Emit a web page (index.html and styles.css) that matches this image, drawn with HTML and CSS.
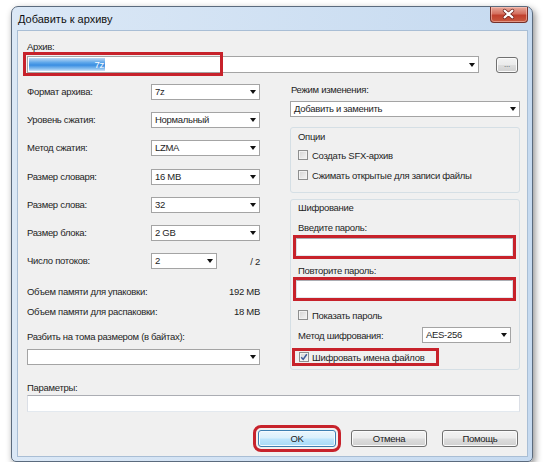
FILE: index.html
```html
<!DOCTYPE html>
<html lang="ru">
<head>
<meta charset="utf-8">
<title>Добавить к архиву</title>
<link rel="stylesheet" href="styles.css">
</head>
<body>
<div class="window">
  <div class="titlebar">
    <span class="title">Добавить к архиву</span>
    <div class="close">
      <svg width="38" height="16" viewBox="0 0 38 16">
        <path d="M15 4.5 L23 11.5 M23 4.5 L15 11.5" stroke="#6a1f18" stroke-width="3.6" stroke-linecap="round" fill="none"/>
        <path d="M15 4.5 L23 11.5 M23 4.5 L15 11.5" stroke="#ffffff" stroke-width="2.2" stroke-linecap="round" fill="none"/>
      </svg>
    </div>
  </div>
  <div class="client">
    <div class="lbl">Архив:</div>
    <div class="archive-row">
      <div class="combo archive-combo"><span class="selected"><span class="hidden-name"></span>7z</span><span class="arrow"></span></div>
      <div class="btn dots">...</div>
      <div class="mark mark-archive"></div>
    </div>

    <div class="cols">
      <div class="left">
        <div class="row"><span class="lbl rl">Формат архива:</span><div class="combo sel"><span class="val">7z</span><span class="arrow"></span></div></div>
        <div class="row"><span class="lbl rl">Уровень сжатия:</span><div class="combo sel"><span class="val">Нормальный</span><span class="arrow"></span></div></div>
        <div class="row"><span class="lbl rl">Метод сжатия:</span><div class="combo sel"><span class="val">LZMA</span><span class="arrow"></span></div></div>
        <div class="row"><span class="lbl rl">Размер словаря:</span><div class="combo sel"><span class="val">16 MB</span><span class="arrow"></span></div></div>
        <div class="row"><span class="lbl rl">Размер слова:</span><div class="combo sel"><span class="val">32</span><span class="arrow"></span></div></div>
        <div class="row"><span class="lbl rl">Размер блока:</span><div class="combo sel"><span class="val">2 GB</span><span class="arrow"></span></div></div>
        <div class="row"><span class="lbl rl">Число потоков:</span><div class="combo sel-short"><span class="val">2</span><span class="arrow"></span></div><span class="threads">/ 2</span></div>

        <div class="mem">
          <div class="memrow"><span>Объем памяти для упаковки:</span><span>192 MB</span></div>
          <div class="memrow"><span>Объем памяти для распаковки:</span><span>18 MB</span></div>
        </div>

        <div class="lbl split-lbl">Разбить на тома размером (в байтах):</div>
        <div class="combo split"><span class="val"></span><span class="arrow"></span></div>
      </div>

      <div class="right">
        <div class="lbl mode-lbl">Режим изменения:</div>
        <div class="combo mode"><span class="val">Добавить и заменить</span><span class="arrow"></span></div>

        <div class="group opts">
          <div class="lbl gl">Опции</div>
          <div class="cb-row"><span class="cb"></span><span>Создать SFX-архив</span></div>
          <div class="cb-row"><span class="cb"></span><span>Сжимать открытые для записи файлы</span></div>
        </div>

        <div class="group enc">
          <div class="lbl gl">Шифрование</div>
          <div class="lbl gl pw1-lbl">Введите пароль:</div>
          <div class="input pw pw1"></div>
          <div class="lbl gl pw2-lbl">Повторите пароль:</div>
          <div class="input pw pw2"></div>
          <div class="cb-row show-pw"><span class="cb"></span><span>Показать пароль</span></div>
          <div class="method-row"><span>Метод шифрования:</span><div class="combo aes"><span class="val">AES-256</span><span class="arrow"></span></div></div>
          <div class="encrypt-names"><span class="cb checked"><svg width="8" height="8" viewBox="0 0 8 8"><path d="M1.2 4.2 L3.2 6.4 L6.8 1.2" stroke="#3d5a9a" stroke-width="1.5" fill="none"/></svg></span><span class="nw">Шифровать имена файлов</span></div>
        </div>
      </div>
    </div>

    <div class="lbl params-lbl">Параметры:</div>
    <div class="input params"></div>

    <div class="buttons">
      <div class="btn default ok">OK</div>
      <div class="btn">Отмена</div>
      <div class="btn">Помощь</div>
    </div>
  </div>
</div>
</body>
</html>
```
FILE: styles.css
```css
* { box-sizing: border-box; }
html, body { margin: 0; background: #ffffff; }
body {
  font-family: "Liberation Sans", Arial, sans-serif;
  font-size: 9.5px;
  letter-spacing: -0.3px;
  color: #1e1e1e;
}
span { white-space: nowrap; }

.window {
  margin: 6px 0 0 11px;
  width: 522px;
  height: 456px;
  border: 1px solid #5b6b7e;
  border-radius: 7px 7px 5px 5px;
  background: linear-gradient(to right, #dbe8f6, #c6daf0);
  box-shadow: 2px 3px 7px rgba(0, 0, 0, 0.45);
  padding: 0 4px 4px 5px;
  display: flex;
  flex-direction: column;
}

.titlebar {
  height: 23px;
  display: flex;
  justify-content: space-between;
  align-items: flex-start;
  padding-left: 1px;
}
.title {
  font-size: 11px;
  letter-spacing: 0;
  color: #111;
  line-height: 24px;
}
.close {
  width: 38px;
  height: 16px;
  border: 1px solid #74302a;
  border-top: none;
  border-radius: 0 0 4px 4px;
  background: linear-gradient(#e9a99b 0%, #d4705f 45%, #c1402d 55%, #c85a40 100%);
  box-shadow: inset 0 0 0 1px rgba(255, 210, 200, 0.5);
  display: flex;
}
.close svg { display: block; margin: -1px 0 0 -1px; }

.client {
  flex: 1;
  background: #f0f0f0;
  border: 1px solid #a9bed5;
  padding: 10px 7px 0 9px;
  display: flex;
  flex-direction: column;
}

.lbl { line-height: 12px; height: 12px; white-space: nowrap; }

/* combos */
.combo {
  position: relative;
  height: 16px;
  background: #ffffff;
  border: 1px solid #a4a4a4;
  display: flex;
  align-items: center;
  padding-left: 3px;
}
.combo .val { line-height: 14px; }
.arrow {
  position: absolute;
  right: 3px;
  top: 50%;
  margin-top: -2px;
  width: 0;
  height: 0;
  border-left: 3.5px solid transparent;
  border-right: 3.5px solid transparent;
  border-top: 4px solid #111;
}

.archive-row {
  position: relative;
  display: flex;
  align-items: center;
  margin-top: 3px;
  height: 17px;
  padding-right: 2px;
}
.archive-combo { width: 452px; height: 17px; padding-left: 1px; }
.selected {
  display: flex;
  align-items: center;
  justify-content: flex-end;
  width: 76px;
  height: 13px;
  padding-right: 1px;
  color: #fff;
  background: linear-gradient(#bcd9f4 0%, #5ea7ea 35%, #3a8ee2 55%, #8fc3f0 85%, #d2e6f8 100%);
}
.hidden-name { flex: 1; }

.btn {
  height: 17px;
  border: 1px solid #707070;
  border-radius: 3px;
  background: linear-gradient(#f3f3f3 0%, #ebebeb 48%, #dddddd 52%, #d0d0d0 100%);
  box-shadow: inset 0 0 0 1px #fbfbfb;
  display: flex;
  align-items: center;
  justify-content: center;
  color: #222;
}
.dots { margin-left: auto; width: 22px; height: 16px; font-size: 8px; color: #555; }

.mark {
  position: absolute;
  border: 3px solid #c7222b;
}
.mark-archive { left: -4px; top: -4px; width: 200px; height: 24px; }

.cols {
  display: flex;
  gap: 30px;
  margin-top: 5px;
}
.left { width: 233px; }
.right { width: 230px; }

.row {
  height: 28.2px;
  display: flex;
  align-items: center;
}
.rl { width: 124px; }
.sel { width: 109px; }
.sel-short { width: 66px; }
.threads { margin-left: auto; }

.mem { margin-top: 6px; }
.memrow {
  height: 20px;
  display: flex;
  align-items: center;
  justify-content: space-between;
}
.split-lbl { margin-top: 10px; }
.split { margin-top: 6px; width: 233px; }

.mode-lbl { margin-top: 6px; padding-left: 1px; }
.mode { margin-top: 5px; }

.group {
  border: 1px solid #d5dfe5;
  border-radius: 3px;
}
.gl { padding-left: 2px; }
.opts { margin-top: 10px; padding: 3px 6px 9px 5px; }
.enc { margin-top: 6px; padding: 2px 6px 6px 5px; }

.cb-row {
  height: 16px;
  display: flex;
  align-items: center;
  gap: 4px;
  margin-top: 4px;
  padding-left: 2px;
}
.cb {
  width: 10px;
  height: 10px;
  flex: none;
  border: 1px solid #8e8f8f;
  background: linear-gradient(135deg, #d4d4d4, #f6f6f6);
  box-shadow: inset 0 0 0 1px #f2f2f2;
  display: flex;
  align-items: center;
  justify-content: center;
}

.input {
  background: #ffffff;
  border: 1px solid #abadb3;
  border-left-color: #dbdfe6;
  border-right-color: #dbdfe6;
  border-bottom-color: #e3e9ef;
}
.pw { height: 18px; outline: 3px solid #c7222b; }
.pw1-lbl { margin-top: 8px; }
.pw1 { margin-top: 4px; }
.pw2-lbl { margin-top: 9px; }
.pw2 { margin-top: 3px; }
.show-pw { margin-top: 9px; }

.method-row {
  margin-top: 4px;
  height: 16px;
  display: flex;
  align-items: center;
  padding-left: 2px;
}
.aes { margin-left: auto; margin-right: 2px; width: 89px; }

.encrypt-names {
  margin-top: 8px;
  margin-left: -1px;
  width: 141px;
  height: 12px;
  display: flex;
  align-items: center;
  gap: 3px;
  padding-left: 4px;
  outline: 3px solid #c7222b;
}
.nw { flex: none; }

.params-lbl { margin-top: 12px; }
.params { margin-top: 1px; height: 17px; }

.buttons {
  display: flex;
  justify-content: flex-end;
  gap: 15px;
  margin-top: 18px;
  padding-right: 2px;
}
.buttons .btn { width: 76px; }
.buttons .ok { width: 78px; }
.default {
  border-color: #3c7fb1;
  background: linear-gradient(#eaf6fd 0%, #d9f0fc 48%, #bee6fd 52%, #a7d9f5 100%);
  box-shadow: inset 0 0 0 1px #f4fbff;
}
.ok { outline: 3px solid #c7222b; outline-offset: 2px; }
```
